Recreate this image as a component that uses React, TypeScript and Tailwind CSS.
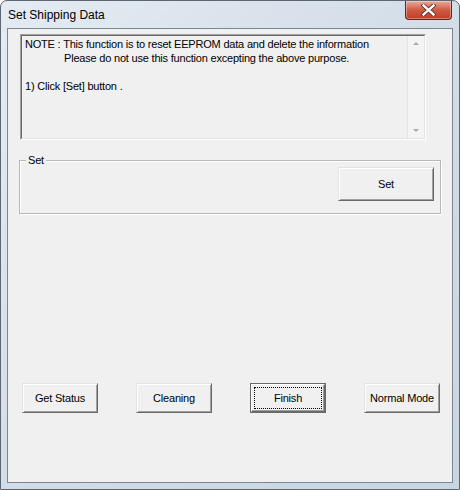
import React from 'react';

const btn =
  'flex items-center justify-center bg-[#f0f0f0] border border-t-[#e3e3e3] border-l-[#e3e3e3] border-r-[#696969] border-b-[#696969] shadow-[inset_1px_1px_0_#ffffff,inset_-1px_-1px_0_#a0a0a0] text-[11px] tracking-[-0.2px] text-black';

function CloseButton() {
  return (
    <div className="absolute right-[7px] top-0 w-[47px] h-[19px] rounded-b-[4px] border border-t-0 border-[#5a2a22] bg-gradient-to-b from-[#e9a99a] via-[#cf5a44] to-[#c33b25] shadow-[inset_0_0_0_1px_rgba(255,255,255,0.35)] flex items-center justify-center">
      <svg width="15" height="12" viewBox="0 0 15 12">
        <path d="M2.5 1.5 L12.5 10.5 M12.5 1.5 L2.5 10.5" stroke="#5b2d26" strokeWidth="4.2" strokeLinecap="square" />
        <path d="M2.5 1.5 L12.5 10.5 M12.5 1.5 L2.5 10.5" stroke="#ffffff" strokeWidth="2.4" strokeLinecap="square" />
      </svg>
    </div>
  );
}

export default function App() {
  return (
    <div className="w-[460px] h-[490px] bg-white" style={{ fontFamily: '"Liberation Sans", Arial, sans-serif' }}>
      <div className="relative w-[460px] h-[490px] rounded-t-[7px] border border-[#5d6772] bg-gradient-to-br from-[#e4ebf2] via-[#d3dde8] to-[#c8d5e2] flex flex-col">
        {/* title bar */}
        <div className="h-[27px] flex items-center pl-[7px] text-[12px] text-black">Set Shipping Data</div>
        <CloseButton />

        {/* client area */}
        <div className="mx-[6px] h-[455px] border border-[#7b8794] bg-[#f0f0f0] pl-[12px] pt-[5px]">
          {/* read-only text box */}
          <div className="w-[406px] h-[106px] border border-t-[#a0a0a0] border-l-[#a0a0a0] border-r-white border-b-white">
            <div className="w-full h-full border border-t-[#696969] border-l-[#696969] border-r-[#e3e3e3] border-b-[#e3e3e3] flex">
              <div className="flex-1 pl-[3px] pt-[1px] text-[11px] tracking-[-0.2px] leading-[14px] text-black">
                <div>NOTE : This function is to reset EEPROM data and delete the information</div>
                <div className="pl-[39px]">Please do not use this function excepting the above purpose.</div>
                <div>&nbsp;</div>
                <div>1) Click [Set] button .</div>
              </div>
              <div className="w-[17px] bg-[#f4f4f4] border-l border-[#e4e4e4] flex flex-col justify-between items-center py-[6px]">
                <div className="w-0 h-0 border-l-[3px] border-r-[3px] border-b-[3px] border-l-transparent border-r-transparent border-b-[#a8a8a8]" />
                <div className="w-0 h-0 border-l-[3px] border-r-[3px] border-t-[3px] border-l-transparent border-r-transparent border-t-[#a8a8a8]" />
              </div>
            </div>
          </div>

          {/* group box */}
          <div className="relative mt-[20px] -ml-[1px] w-[422px] h-[54px] border border-[#b8b8b8] shadow-[inset_1px_1px_0_#ffffff,1px_1px_0_#ffffff]">
            <span className="absolute -top-[8px] left-[6px] px-[2px] bg-[#f0f0f0] text-[11px] tracking-[-0.2px] leading-[14px] text-black">Set</span>
            <div className="flex justify-end pt-[6px] pr-[6px]">
              <button className={`${btn} w-[96px] h-[34px]`}>Set</button>
            </div>
          </div>

          {/* bottom buttons */}
          <div className="mt-[169px] ml-[2px] flex gap-[38px]">
            <button className={`${btn} w-[76px] h-[30px]`}>Get Status</button>
            <button className={`${btn} w-[76px] h-[30px]`}>Cleaning</button>
            <button className="w-[76px] h-[30px] border border-[#696969] bg-[#f0f0f0]">
              <div className="w-full h-full border border-t-white border-l-white border-r-[#696969] border-b-[#696969] shadow-[inset_-1px_-1px_0_#a0a0a0] p-[2px]">
                <div className="w-full h-full border border-dotted border-black flex items-center justify-center text-[11px] tracking-[-0.2px] text-black">
                  Finish
                </div>
              </div>
            </button>
            <button className={`${btn} w-[76px] h-[30px]`}>Normal Mode</button>
          </div>
        </div>
      </div>
    </div>
  );
}
